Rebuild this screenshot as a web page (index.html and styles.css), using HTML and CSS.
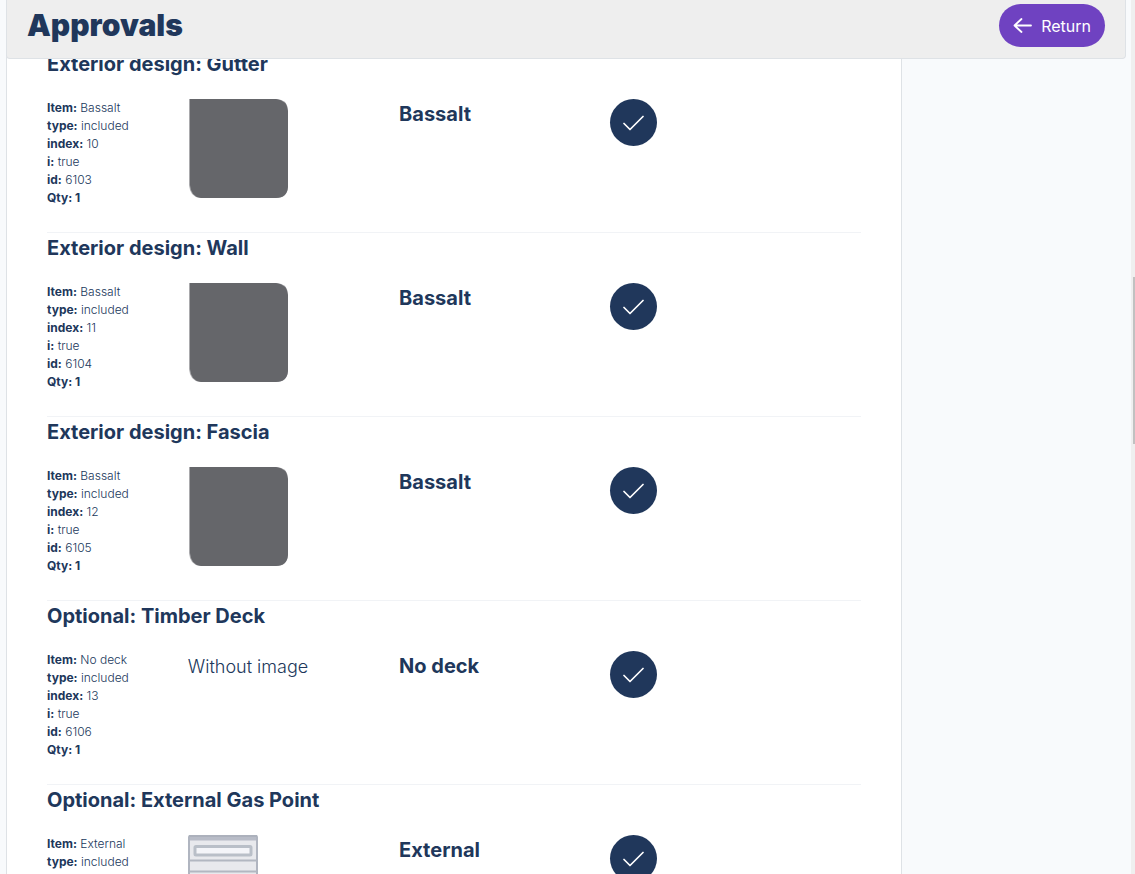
FILE: index.html
```html
<!DOCTYPE html>
<html lang="en">
<head>
<meta charset="utf-8">
<meta name="viewport" content="width=device-width, initial-scale=1">
<title>Approvals</title>
<link rel="stylesheet" href="styles.css">
</head>
<body>
<svg class="defs" aria-hidden="true">
  <symbol id="check" viewBox="0 0 22 16"><path d="M1 8.500L7 14.500L20 1.500" fill="none" stroke="currentColor" stroke-width="1.7" stroke-linecap="round" stroke-linejoin="round"/></symbol>
  <symbol id="swatch" viewBox="0 0 100 100"><path d="M1 0H89Q100 1 100 12V88Q99 99 88 99H12Q2 98 1 86Z" fill="#a9a9ac"/><path d="M2 0H88Q99 1 100 12V88Q99 99 88 99H13Q3 98 2 86Z" fill="#65666a"/></symbol>
</svg>
<div class="page">
  <header class="topbar">
    <h1 class="title">Approvals</h1>
    <button type="button" class="return">
      <svg class="arrow" viewBox="0 0 19 16" aria-hidden="true"><path d="M18 7.500H1.500M8.500 1L1.500 7.500L8.500 14" fill="none" stroke="currentColor" stroke-width="1.8" stroke-linecap="round" stroke-linejoin="round"/></svg>
      <span>Return</span>
    </button>
  </header>
  <main class="card">
    <section class="item">
      <h2 class="heading">Exterior design: Gutter</h2>
      <div class="row">
        <ul class="details"><li><b>Item:</b> Bassalt</li><li><b>type:</b> included</li><li><b>index:</b> 10</li><li><b>i:</b> true</li><li><b>id:</b> 6103</li><li><b>Qty: 1</b></li></ul>
        <div class="media"><svg class="swatch" role="img" aria-label="Bassalt"><use href="#swatch"/></svg></div>
        <h3 class="choice">Bassalt</h3>
        <div class="action"><button type="button" class="approve" aria-label="Approve gutter"><svg class="tick"><use href="#check"/></svg></button></div>
      </div>
    </section>
    <section class="item">
      <h2 class="heading">Exterior design: Wall</h2>
      <div class="row">
        <ul class="details"><li><b>Item:</b> Bassalt</li><li><b>type:</b> included</li><li><b>index:</b> 11</li><li><b>i:</b> true</li><li><b>id:</b> 6104</li><li><b>Qty: 1</b></li></ul>
        <div class="media"><svg class="swatch" role="img" aria-label="Bassalt"><use href="#swatch"/></svg></div>
        <h3 class="choice">Bassalt</h3>
        <div class="action"><button type="button" class="approve" aria-label="Approve wall"><svg class="tick"><use href="#check"/></svg></button></div>
      </div>
    </section>
    <section class="item">
      <h2 class="heading">Exterior design: Fascia</h2>
      <div class="row">
        <ul class="details"><li><b>Item:</b> Bassalt</li><li><b>type:</b> included</li><li><b>index:</b> 12</li><li><b>i:</b> true</li><li><b>id:</b> 6105</li><li><b>Qty: 1</b></li></ul>
        <div class="media"><svg class="swatch" role="img" aria-label="Bassalt"><use href="#swatch"/></svg></div>
        <h3 class="choice">Bassalt</h3>
        <div class="action"><button type="button" class="approve" aria-label="Approve fascia"><svg class="tick"><use href="#check"/></svg></button></div>
      </div>
    </section>
    <section class="item">
      <h2 class="heading">Optional: Timber Deck</h2>
      <div class="row">
        <ul class="details"><li><b>Item:</b> No deck</li><li><b>type:</b> included</li><li><b>index:</b> 13</li><li><b>i:</b> true</li><li><b>id:</b> 6106</li><li><b>Qty: 1</b></li></ul>
        <div class="media">Without image</div>
        <h3 class="choice">No deck</h3>
        <div class="action"><button type="button" class="approve" aria-label="Approve timber deck"><svg class="tick"><use href="#check"/></svg></button></div>
      </div>
    </section>
    <section class="item">
      <h2 class="heading">Optional: External Gas Point</h2>
      <div class="row">
        <ul class="details"><li><b>Item:</b> External</li><li><b>type:</b> included</li></ul>
        <div class="media">
          <svg class="gas" viewBox="0 0 70 100" role="img" aria-label="Gas point">
            <rect x="1" y="1" width="68" height="98" rx="1" fill="#e8e9ed" stroke="#b0b5c0" stroke-width="2"/>
            <path d="M2 2H68V5.500H2Z" fill="#b8bcc7"/>
            <path d="M1 1H69" stroke="#acb1bc" stroke-width="2"/>
            <rect x="7" y="11.500" width="56" height="8.500" rx="1" fill="#f4f5f9" stroke="#b9bfc8" stroke-width="3"/>
            <path d="M1 25.500H69M1 36.500H69" stroke="#b2b7c1" stroke-width="2"/>
          </svg>
        </div>
        <h3 class="choice">External</h3>
        <div class="action"><button type="button" class="approve" aria-label="Approve external gas point"><svg class="tick"><use href="#check"/></svg></button></div>
      </div>
    </section>
  </main>
</div>
<div class="scrollbar" aria-hidden="true"><div class="thumb"></div></div>
</body>
</html>
```

FILE: styles.css
```css
* { box-sizing: border-box; }
body {
  margin: 0;
  height: 100vh;
  overflow: hidden;
  background: #f8fafc;
  color: #20375b;
  font-family: Inter, "Liberation Sans", sans-serif;
  font-size: 18px;
  font-weight: 350;
}
h1, h2, h3, ul { margin: 0; padding: 0; }
b { font-weight: 700; }
button { border: 0; padding: 0; font: inherit; color: #fff; cursor: pointer; }
.defs { display: none; }
.page { padding: 0 9px 0 6px; }
.topbar {
  position: sticky;
  top: 0;
  z-index: 2;
  display: flex;
  align-items: center;
  justify-content: space-between;
  padding: 4px 20px 11px 20px;
  background: #eee;
  border: 1px solid #dee2e6;
  border-top: 0;
  border-radius: 0 0 4px 4px;
}
.title { font-size: 30px; line-height: 43px; font-weight: 900; }
.return {
  display: flex;
  align-items: center;
  gap: 9px;
  height: 43px;
  padding: 0 14px;
  border-radius: 22px;
  background: #6f42c1;
  font-size: 16px;
  font-weight: 400;
}
.arrow { width: 19px; height: 16px; }
.card {
  width: 80%;
  margin-top: -11px;
  padding: 0 40px;
  background: #fff;
  border: 1px solid #dee2e6;
  border-top: 0;
}
.item { padding-bottom: 25px; border-top: 1px solid #f1f3f6; }
.heading { margin-bottom: 20px; font-size: 20px; line-height: 30px; font-weight: 700; }
.row { display: grid; grid-template-columns: repeat(12, 1fr); column-gap: 31px; align-items: start; }
.details { grid-column: span 2; list-style: none; font-size: 12px; line-height: 18px; white-space: nowrap; }
.media { grid-column: span 3; line-height: 32px; }
.choice { grid-column: span 3; font-size: 20px; line-height: 30px; font-weight: 700; }
.action { grid-column: span 4; }
.swatch { display: block; width: 100px; height: 100px; }
.gas { display: block; width: 70px; height: 100px; }
.approve {
  display: flex;
  align-items: center;
  justify-content: center;
  width: 47px;
  height: 47px;
  border-radius: 50%;
  background: #20375b;
}
.tick { width: 22px; height: 16px; }
.scrollbar { position: fixed; top: 0; right: 0; bottom: 0; width: 4px; padding: 277px 0 0 2px; background: #efefef; }
.thumb { height: 167px; background: #c1c1c1; }
```
